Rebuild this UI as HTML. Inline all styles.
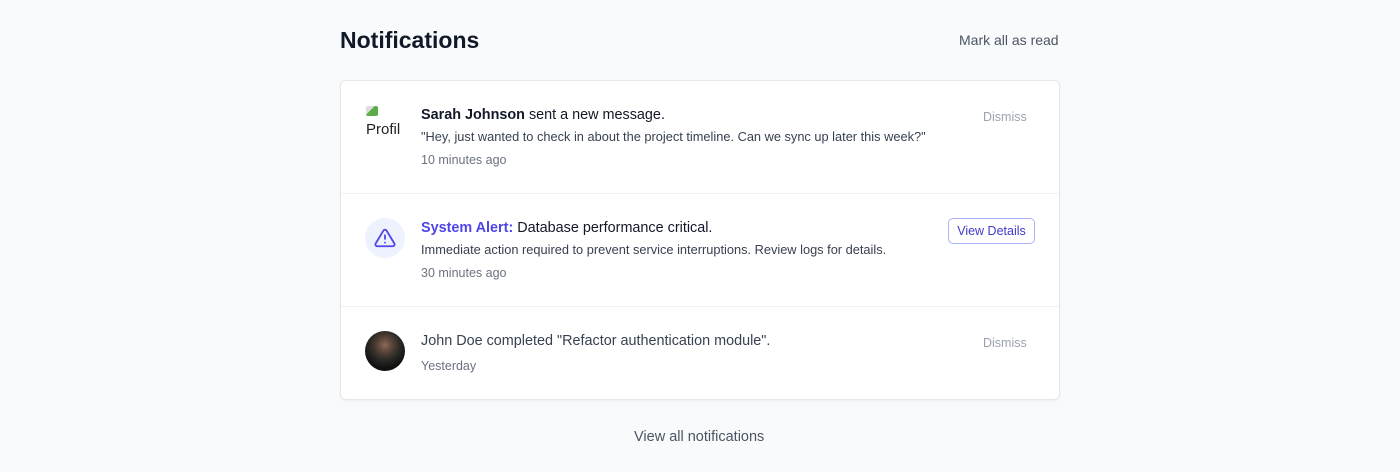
<!DOCTYPE html>
<html><head><style>
body{margin:0;background:#f9fafb;font-family:"Liberation Sans",sans-serif;width:1400px;height:472px;position:relative;overflow:hidden}
.a{position:absolute;white-space:nowrap}
.card{position:absolute;left:340px;top:80px;width:718px;height:318px;background:#fff;border:1px solid #e5e7eb;border-radius:6px;box-shadow:0 1px 2px rgba(0,0,0,.05)}
.sep{position:absolute;left:341px;width:718px;height:1px;background:#f0f1f3}
.t{font-size:14.4px;color:#111827}
.s{font-size:12.8px;color:#374151}
.m{font-size:12.5px;color:#6b7280}
.d{font-size:12.5px;color:#9ca3af}
</style></head><body>
<div class="a" style="left:340px;top:27px;font-size:23px;font-weight:bold;color:#111827">Notifications</div>
<div class="a" style="left:959px;top:32px;font-size:14px;color:#4b5563">Mark all as read</div>
<div class="card"></div>
<div class="sep" style="top:193px"></div>
<div class="sep" style="top:306px"></div>

<div class="a" style="left:366px;top:106px;width:12px;height:10px;background:linear-gradient(135deg,#ddd 40%,#5cad4a 40%);border-radius:2px"></div>
<div class="a" style="left:366px;top:121px;font-size:15px;color:#222;width:36px;overflow:hidden">Profil</div>
<div class="a t" style="left:421px;top:107px"><b>Sarah Johnson</b> sent a new message.</div>
<div class="a s" style="left:421px;top:129px">"Hey, just wanted to check in about the project timeline. Can we sync up later this week?"</div>
<div class="a m" style="left:421px;top:153px">10 minutes ago</div>
<div class="a d" style="left:983px;top:110px">Dismiss</div>

<div class="a" style="left:365px;top:218px;width:40px;height:40px;border-radius:50%;background:#eef2ff"></div>
<svg class="a" style="left:374px;top:227px" width="22" height="22" viewBox="0 0 24 24" fill="none" stroke="#4f46e5" stroke-width="2" stroke-linecap="round" stroke-linejoin="round"><path d="M12 9v4M12 17h.01M10.3 3.9 1.8 18a2 2 0 0 0 1.7 3h17a2 2 0 0 0 1.7-3L13.7 3.9a2 2 0 0 0-3.4 0z"/></svg>
<div class="a t" style="left:421px;top:220px"><b style="color:#4f46e5">System Alert:</b> Database performance critical.</div>
<div class="a s" style="left:421px;top:242px">Immediate action required to prevent service interruptions. Review logs for details.</div>
<div class="a m" style="left:421px;top:266px">30 minutes ago</div>
<div class="a" style="left:948px;top:218px;width:85px;height:24px;border:1px solid #a5b4fc;border-radius:5px;font-size:12.5px;color:#4338ca;text-align:center;line-height:24px">View Details</div>

<div class="a" style="left:365px;top:331px;width:40px;height:40px;border-radius:50%;background:radial-gradient(circle at 50% 35%,#8a6a58 0,#5a4438 22%,#2a2a26 45%,#111 70%)"></div>
<div class="a t" style="left:421px;top:333px;color:#374151">John Doe completed "Refactor authentication module".</div>
<div class="a m" style="left:421px;top:359px">Yesterday</div>
<div class="a d" style="left:983px;top:336px">Dismiss</div>

<div class="a" style="left:634px;top:429px;font-size:14.5px;color:#4b5563">View all notifications</div>
</body></html>
